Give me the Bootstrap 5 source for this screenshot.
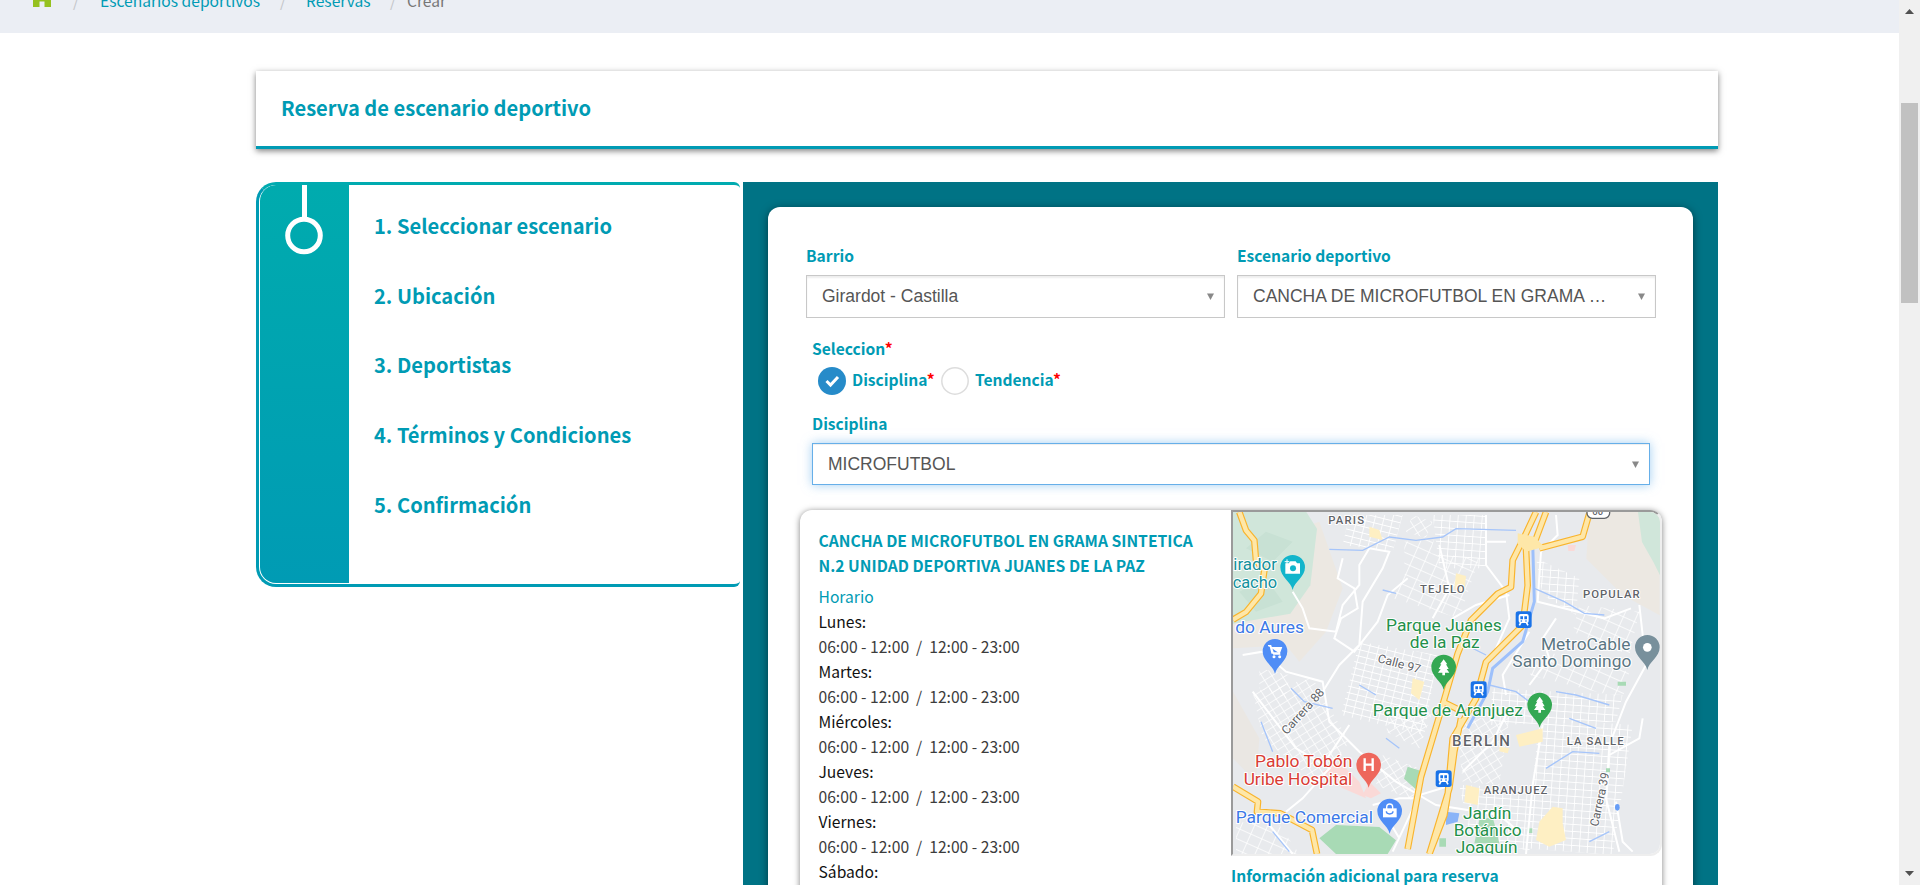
<!DOCTYPE html>
<html lang="es">
<head>
<meta charset="utf-8">
<meta name="viewport" content="width=device-width, initial-scale=1">
<title>Reserva de escenario deportivo</title>
<link href="https://cdn.jsdelivr.net/npm/bootstrap@5.3.0/dist/css/bootstrap.min.css" rel="stylesheet">
<style>
:root{--teal:#009bb4;--deep:#007385}
body{height:885px;overflow:hidden;font-family:"Noto Sans CJK SC",sans-serif;color:#333;background:#fff;font-size:16px;line-height:25px}
.page-area{width:1899px;height:885px}
.crumbs{height:33px;background:#ebeef4;color:#777}
.crumbs ol{margin-top:-12px;line-height:24px;font-size:15.6px;padding-left:33px}
.crumbs a{color:var(--teal);text-decoration:none}
.crumbs .sep{color:#c4c6ca}
.shell{width:1462px;margin:38px auto 0 256px}
.title-box{height:78px;border-bottom:3px solid var(--teal);box-shadow:0 2px 6px rgba(0,0,0,.5);padding:0 25px;color:var(--teal)}
.title-box h1{font-size:20.1px;line-height:73px;font-weight:700;margin:0}
.cols{margin-top:33px;gap:3px}
.steps{width:484px;height:405px;border-radius:20px 6px 6px 20px;border:3px solid var(--teal);border-top-color:#00abb0;border-right:0;overflow:hidden}
.steps .rail{width:89px;margin:0 0 1px 1px;background:linear-gradient(#00abae,#009bb4);border-radius:16px 0 0 16px}
.steps ol{list-style:none;margin:0;padding:21px 0 0 25px;color:var(--teal);font-weight:700;font-size:20.1px;line-height:40px}
.steps li{height:69.7px}
.panel{width:975px;height:750px;background:var(--deep);padding:25px}
.sheet{height:750px;background:#fff;border-radius:12px;box-shadow:0 2px 8px rgba(0,0,0,.5);padding:36px 31px 0 32px;width:925px}
.lab{color:var(--teal);font-weight:700;font-size:15.6px;line-height:25px}
.lab i{color:#f00;font-style:normal}
.pick{height:43px;margin-top:7px;border:1px solid #c8c8c8;box-shadow:inset 0 2px 2px rgba(0,0,0,.07);font:17.5px/39px "Liberation Sans",sans-serif;color:#555;padding:0 10px 0 15px}
.pick span{margin-top:-1px}
.pick.on{border-color:#66afe9;height:42px;box-shadow:inset 0 1px 1px rgba(0,0,0,.07),0 0 10px rgba(102,175,233,.6)}
.venue{width:862px;height:500px;margin-top:25px;border-radius:12px;box-shadow:0 1px 6px rgba(0,0,0,.5);background:#fff}
.venue .info{width:431px;padding:18px 20px 0 18.500px}
.venue h2{font-size:15.65px;line-height:25px;font-weight:700;color:var(--teal);margin:0 -10px 6px 0}
.venue p{margin:0;white-space:pre;color:#3c3c3c;font-size:15.65px}
.venue p.day{color:#111}
.venue p.hd{color:var(--teal)}
.mapbox{width:431px;height:346px;border:2px solid;border-color:#9a9a9a #eee #eee #9a9a9a;border-radius:0 12px 12px 0;overflow:hidden}
.mapbox svg{display:block}
.sbar{width:21px;height:885px;background:#f0f0f0;padding:9px 0}
.thumb{width:17px;height:200px;background:#c1c1c1;margin-top:89px}
</style>
</head>
<body class="d-flex">
<div class="page-area overflow-hidden flex-shrink-0">
  <nav class="crumbs overflow-hidden">
    <ol class="d-flex list-unstyled mb-0">
      <li style="width:40px"><svg width="18" height="19" viewBox="0 0 18 19" class="d-block"><path fill="#95c11f" d="M9 0 0 9v10h6.500v-5.500h5V19H18V9z"/></svg></li>
      <li class="sep" style="width:27px">/</li>
      <li style="width:180px"><a href="#">Escenarios deportivos</a></li>
      <li class="sep" style="width:26px">/</li>
      <li style="width:84px"><a href="#">Reservas</a></li>
      <li class="sep" style="width:17px">/</li>
      <li>Crear</li>
    </ol>
  </nav>
  <main class="shell">
    <header class="title-box"><h1>Reserva de escenario deportivo</h1></header>
    <div class="cols d-flex align-items-start">
      <aside class="steps d-flex flex-shrink-0">
        <div class="rail"><svg width="89" height="80" class="d-block"><path d="M44.500 0v32" stroke="#fff" stroke-width="5"/><circle cx="44" cy="50.500" r="16.300" fill="none" stroke="#fff" stroke-width="5"/></svg></div>
        <ol>
          <li>1. Seleccionar escenario</li><li>2. Ubicación</li><li>3. Deportistas</li><li>4. Términos y Condiciones</li><li>5. Confirmación</li>
        </ol>
      </aside>
      <section class="panel flex-shrink-0">
        <div class="sheet">
          <div class="d-flex" style="gap:12px;margin-left:6px;width:850px">
            <div style="width:419px"><div class="lab">Barrio</div><div class="pick d-flex justify-content-between align-items-center"><span>Girardot - Castilla</span><svg width="7" height="7"><path d="M0 .500h7L3.500 7z" fill="#888"/></svg></div></div>
            <div style="width:419px"><div class="lab">Escenario deportivo</div><div class="pick d-flex justify-content-between align-items-center"><span>CANCHA DE MICROFUTBOL EN GRAMA …</span><svg width="7" height="7"><path d="M0 .500h7L3.500 7z" fill="#888"/></svg></div></div>
          </div>
          <div style="padding:18px 0 0 12px;width:850px">
            <div class="lab">Seleccion<i>*</i></div>
            <div class="d-flex lab" style="padding:6px 0 0 6px">
              <svg width="28" height="28" class="me-1"><circle cx="14" cy="14" r="14" fill="#268bc9"/><path d="m8.500 14 4 4 7.500-8" fill="none" stroke="#fff" stroke-width="3"/></svg><span style="width:90px;padding-left:2px">Disciplina<i>*</i></span>
              <svg width="28" height="28" class="me-1" style="margin-left:1px"><circle cx="14" cy="14" r="13.200" fill="#fff" stroke="#ddd" stroke-width="1.500"/></svg><span style="padding-left:2px">Tendencia<i>*</i></span>
            </div>
            <div class="lab" style="margin-top:16px">Disciplina</div>
            <div class="pick on d-flex justify-content-between align-items-center"><span class="mt-0">MICROFUTBOL</span><svg width="7" height="7"><path d="M0 .500h7L3.500 7z" fill="#888"/></svg></div>
          </div>
          <article class="venue d-flex">
            <div class="info">
              <h2>CANCHA DE MICROFUTBOL EN GRAMA SINTETICA N.2 UNIDAD DEPORTIVA JUANES DE LA PAZ</h2>
              <p class="hd">Horario</p>
              <p class="day">Lunes:</p><p>06:00 - 12:00  /  12:00 - 23:00</p>
              <p class="day">Martes:</p><p>06:00 - 12:00  /  12:00 - 23:00</p>
              <p class="day">Miércoles:</p><p>06:00 - 12:00  /  12:00 - 23:00</p>
              <p class="day">Jueves:</p><p>06:00 - 12:00  /  12:00 - 23:00</p>
              <p class="day">Viernes:</p><p>06:00 - 12:00  /  12:00 - 23:00</p>
              <p class="day">Sábado:</p>
            </div>
            <div>
              <div class="mapbox">
<svg width="427" height="342" viewBox="21 21 1281 1026" preserveAspectRatio="none" font-family="Roboto, sans-serif">
<defs>
<pattern id="g1" width="26" height="19" patternUnits="userSpaceOnUse" patternTransform="rotate(14)"><path d="M0 0H26M0 0V19" stroke="#fff" stroke-width="5"/></pattern>
<pattern id="g2" width="24" height="21" patternUnits="userSpaceOnUse" patternTransform="rotate(4)"><path d="M0 0H24M0 0V21" stroke="#fff" stroke-width="5"/></pattern>
<pattern id="g3" width="26" height="22" patternUnits="userSpaceOnUse" patternTransform="rotate(-32)"><path d="M0 0H26M0 0V22" stroke="#fff" stroke-width="4.500"/></pattern>
<pattern id="g4" width="36" height="30" patternUnits="userSpaceOnUse" patternTransform="rotate(24)"><path d="M0 0H36M0 0V30" stroke="#fff" stroke-width="4.500"/></pattern>
<g id="pin"><path d="M0 68C-5 43-37 30-37 0a37 37 0 1 1 74 0C37 30 5 43 0 68z"/></g>
<g id="tree" fill="#fff"><path d="m0-25 11 15H7L15 4H9L17 15H4v8h-8v-8h-13L-9 4h-6L-7-10h-4z"/></g>
<g id="metro"><rect x="-24" y="-25" width="48" height="50" rx="8" fill="#1a73e8"/><rect x="-15" y="-17" width="30" height="27" rx="6" fill="#fff"/><path d="M-10-10h8v9h-8zM2-10h8v9H2z" fill="#1a73e8"/><path d="m-8 8-5 9M8 8l5 9" stroke="#fff" stroke-width="5"/><circle cx="-7" cy="4" r="2.500" fill="#1a73e8"/><circle cx="7" cy="4" r="2.500" fill="#1a73e8"/></g>
</defs>
<rect x="21" y="21" width="1281" height="1026" fill="#e8eaed"/>
<path d="M280 50 350 250 300 380 220 470 180 420 21 430V350L200 250 250 60z" fill="#ece8e2"/>
<path d="M21 21h220l32 50-20 170-60 85-172 30z" fill="#d0e6da"/>
<path d="m60 130 60-50 80 30-60 60zM40 260l80-40 50 70-80 30z" fill="#c8e1d4"/>
<path d="M1090 21h211v310l-110-60-110-110z" fill="#ece8e2"/><path d="M1236 21h66v190l-20-40-34-60z" fill="#d0e6da"/>
<path d="M21 560 100 700 90 830 21 760z" fill="#eae7e3"/>
<path d="m340 770 60 60 20 50-70-30-60-50zM410 870l20-40 35 35-30 15zM1025 120h25l-5 18h-18z" fill="#fad9d7"/>
<!-- street blocks -->
<path d="M370 30h160l-30 110-150-20zM400 410l235 40-40 240-250-60z" fill="url(#g1)"/>
<path d="M535 110l90-10-20 80-70 10zM570 140l190 20-60 180-200-60z" fill="url(#g4)"/>
<path d="M620 30h160v160H640zM940 640l280 20-60 390-260-20zM930 160l130 60-10 110-100-60z" fill="url(#g2)"/>
<path d="M80 560l180-40 110 190-90 130-170-140zM690 640l160 0-30 200-110-10zM470 750l110 40-10 100-120-50z" fill="url(#g3)"/>
<path d="M800 550l390 20-20 80-380 10zM700 840l230 10-20 190-180-60z" fill="url(#g2)"/>
<path d="M960 440l250 60-20 80-280-70zM1060 300l180 20-30 130-170-70zM30 950l130 10 60 87H30z" fill="url(#g4)"/>
<path d="M100 490l90 20-10 70-80-30zM560 30l60 20-20 50-60-20zM500 600l120 20-40 110-100-50z" fill="url(#g3)"/>
<path d="M545 785l38 12-14 56-35-32zM280 1000l50-40 130 6 50 40-25 41H330zM760 945l40-10 20 80h-75zM905 970h14v14h-14zM640 1000h20v25h-20z" fill="#a8dab5"/>
<path d="M660 920l40 5-5 25-35 10z" fill="#8ab4f8"/>
<!-- local roads -->
<g fill="none" stroke="#fff" stroke-width="6">
<path d="M200 260l30 50 20 60 80 10 20-80 50-60V180l30-50 60 10-20 50-60 100-10 130-60 60-50 80M350 160l-15 60 50 30 10 60-50 30-20 60 60 40 70-90 30-80 60-50"/>
<path d="M780 30v150l60 80 10 80-40 90M780 110h60M640 120l30 130-50 90M850 270l-100 30-70 40M990 30l5 60-50 50-10 150 200 50 80-30M910 380l-80 130 10 60M1240 300l20 180-60 110-50 130-10 160 40 160M990 340l-40 60 20 60-60 80"/>
<path d="M50 450l60-10 70 60 110 30 20 120 90 90 110 90 120 70 190 30 70 60M80 560l130 170 100 60-80 90-50 40M130 960l70 87M370 660l-80 120M440 900l80-20 60 0M500 1040l80-170 100-30M840 630l-40 80-90 90M950 660l-30 180-20 207M1170 890l20 120 30 30M1150 750l90-50 10-60M460 900l60 100"/>
</g>
<path d="M430 65l30 10 10 30-40-10zM690 205l30 8-5 50-30-10zM560 520l35 10-15 55-25-20zM870 690l80-20 0 40-70 15zM720 840l40 10-5 50-40-8zM940 950l40-45 30 5v45l10 50-50 20-40-20zM820 725l30 5-5 15-25-6z" fill="#feefc3"/>
<!-- streams -->
<g fill="none" stroke="#a6c5fa" stroke-width="4"><path d="M310 133l100 3 80-40 80 10 80-10 40-25 180 5M925 250l90 40 60 35 60 5M470 255l40 10M400 540l50 30M195 550l40 40 85 20M105 650l35 90M480 700l40 30M790 540l80 20 40 30M990 560l60 10 100 30M1030 640l80 30M960 790l80-50 80 5M140 980l50 60M1090 1010l60-30M720 420l60 30"/><path d="M920 110l5 180-35 120-90 80-15 70-60 110" stroke="#9dc0fb" stroke-width="9"/></g>
<ellipse cx="1174" cy="907" rx="7" ry="10" fill="#669df6"/><path d="M1175 530h25v12h-25zM1140 790h12v12h-12z" fill="#a8dab5"/>
<!-- motorways -->
<g fill="none" stroke-linejoin="round">
<path stroke="#f9b42d" stroke-width="20" d="M40 21l20 55 25 30 5 60 25 30-10 70-45 55-39 23M21 845l75 45-3 30 70 5 95 50 15 72M930 21l-40 85-30 60-5 80-40 20-80 80-40 100-50 170-60 200-40 216M960 21l-30 80-30 30 5 110-15 120-110 110-30 110-70 120-15 170-10 60-45 116M705 640l-20 100-15 110-60 197M940 130l130-35 20-70M650 590l50 25"/>
<path stroke="#fee7a8" stroke-width="13" d="M40 21l20 55 25 30 5 60 25 30-10 70-45 55-39 23M21 845l75 45-3 30 70 5 95 50 15 72M930 21l-40 85-30 60-5 80-40 20-80 80-40 100-50 170-60 200-40 216M960 21l-30 80-30 30 5 110-15 120-110 110-30 110-70 120-15 170-10 60-45 116M705 640l-20 100-15 110-60 197M940 130l130-35 20-70M650 590l50 25"/>
</g>
<path d="M875 85l50 10 30 30-55 15-25-25z" fill="#fee7a8"/>
<!-- pins -->
<use href="#pin" x="200" y="187" fill="#12b5cb"/><path d="M178 175h10l5-6h16l4 6h9v31h-44z" fill="#fff"/><circle cx="201" cy="190" r="9" fill="#12b5cb"/><path d="M183 163v14M176 170h14" stroke="#fff" stroke-width="3"/>
<use href="#pin" x="147" y="439" fill="#4f8df6"/><path d="M126 422h8l9 25h20M134 428h32l-6 16h-22z" fill="#fff" stroke="#fff" stroke-width="4"/><circle cx="144" cy="455" r="4.500" fill="#fff"/><circle cx="161" cy="455" r="4.500" fill="#fff"/>
<use href="#pin" x="653" y="486" fill="#34a853"/><use href="#tree" x="653" y="488"/>
<use href="#pin" x="941" y="600" fill="#34a853"/><use href="#tree" x="941" y="600"/>
<use href="#pin" x="1264" y="427" fill="#78909c"/><circle cx="1264" cy="427" r="13" fill="#fff"/>
<use href="#pin" x="428" y="780" fill="#ee675c"/><path d="M416 760v38M440 760v38M416 779h24" stroke="#fff" stroke-width="7"/>
<use href="#pin" x="491" y="918" fill="#4f8df6"/><path d="M471 910h41v27h-41z" fill="#fff"/><path d="M482 912v-6a9 9 0 0 1 18 0v6" fill="none" stroke="#fff" stroke-width="4"/><path d="M481 919a10 8 0 0 0 20 0" fill="none" stroke="#4f8df6" stroke-width="4"/>
<use href="#metro" x="893" y="344"/><use href="#metro" x="758" y="554"/><use href="#metro" x="653" y="821"/>
<rect x="1083" y="0" width="68" height="40" rx="16" fill="#fff" stroke="#5f6368" stroke-width="4"/><text x="1099" y="31" font-size="28" font-weight="500" fill="#5f6368">60</text>
<!-- labels -->
<g font-size="47" stroke="#fff" stroke-width="6" stroke-linejoin="round" paint-order="stroke">
<g fill="#12909c"><text x="22" y="195" textLength="131" lengthAdjust="spacingAndGlyphs">irador</text><text x="20" y="248" textLength="133" lengthAdjust="spacingAndGlyphs">cacho</text></g>
<g fill="#3b78e7"><text x="28" y="383" textLength="206" lengthAdjust="spacingAndGlyphs">do Aures</text><text x="29" y="953" textLength="412" lengthAdjust="spacingAndGlyphs">Parque Comercial</text></g>
<g fill="#23904a"><text x="480" y="378" textLength="347" lengthAdjust="spacingAndGlyphs">Parque Juanes</text><text x="551" y="430" textLength="210" lengthAdjust="spacingAndGlyphs">de la Paz</text><text x="440" y="634" textLength="451" lengthAdjust="spacingAndGlyphs">Parque de Aranjuez</text><text x="711" y="941" textLength="145" lengthAdjust="spacingAndGlyphs">Jardín</text><text x="683" y="993" textLength="204" lengthAdjust="spacingAndGlyphs">Botánico</text><text x="689" y="1045" textLength="186" lengthAdjust="spacingAndGlyphs">Joaquín</text></g>
<g fill="#5b7683"><text x="945" y="434" textLength="268" lengthAdjust="spacingAndGlyphs">MetroCable</text><text x="859" y="487" textLength="357" lengthAdjust="spacingAndGlyphs">Santo Domingo</text></g>
<g fill="#d93c34"><text x="87" y="787" textLength="292" lengthAdjust="spacingAndGlyphs">Pablo Tobón</text><text x="53" y="840" textLength="326" lengthAdjust="spacingAndGlyphs">Uribe Hospital</text></g>
<g fill="#5f6368" font-size="34" font-weight="500"><text x="307" y="57" textLength="107">PARIS</text><text x="582" y="264" textLength="134">TEJELO</text><text x="1071" y="279" textLength="170">POPULAR</text><text x="1022" y="719" textLength="171">LA SALLE</text><text x="773" y="868" textLength="191">ARANJUEZ</text><text x="678" y="722" font-size="45" textLength="174">BERLIN</text></g>
<g fill="#5f6368" font-size="36"><text transform="translate(453 471) rotate(15)" textLength="132" lengthAdjust="spacingAndGlyphs">Calle 97</text><text transform="translate(182 691) rotate(-48)" textLength="172" lengthAdjust="spacingAndGlyphs">Carrera 88</text><text transform="translate(1116 966) rotate(-78)" textLength="164" lengthAdjust="spacingAndGlyphs">Carrera 39</text></g>
</g>
</svg>
              </div>
              <div class="lab" style="margin-top:7px">Información adicional para reserva</div>
            </div>
          </article>
        </div>
      </section>
    </div>
  </main>
</div>
<div class="sbar flex-shrink-0 d-flex flex-column align-items-center">
  <svg width="9" height="5" class="d-block"><path d="M0 5 4.500 0 9 5z" fill="#505050"/></svg>
  <div class="thumb"></div>
  <svg width="9" height="5" class="d-block mt-auto"><path d="M0 0h9L4.500 5z" fill="#505050"/></svg>
</div>
<script src="https://cdn.jsdelivr.net/npm/bootstrap@5.3.0/dist/js/bootstrap.bundle.min.js"></script>
</body>
</html>
